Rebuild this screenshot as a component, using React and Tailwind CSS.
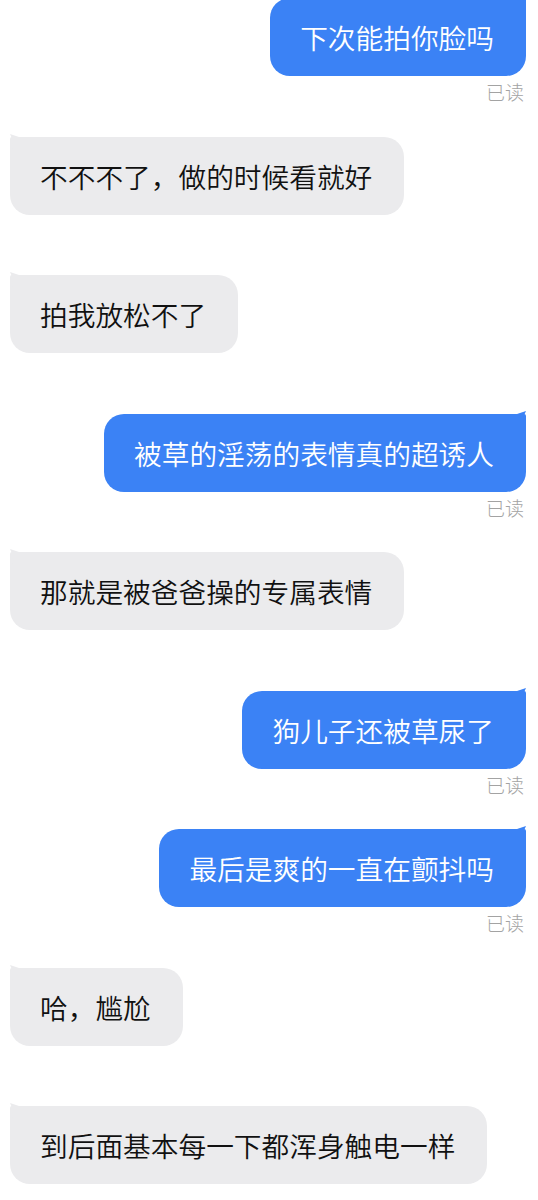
const messages = [
  { side: "out", text: "下次能拍你脸吗", read: true },
  { side: "in", text: "不不不了，做的时候看就好" },
  { side: "in", text: "拍我放松不了" },
  { side: "out", text: "被草的淫荡的表情真的超诱人", read: true },
  { side: "in", text: "那就是被爸爸操的专属表情" },
  { side: "out", text: "狗儿子还被草尿了", read: true },
  { side: "out", text: "最后是爽的一直在颤抖吗", read: true },
  { side: "in", text: "哈，尴尬" },
  { side: "in", text: "到后面基本每一下都浑身触电一样" },
];

// Small ear at the top corner of a bubble
function Ear({ side }) {
  if (side === "out") {
    return (
      <svg
        className="absolute -top-[3px] -right-[1px]"
        width="10"
        height="22"
        viewBox="0 0 10 22"
      >
        <path d="M0 3 L9 0 Q5 6 7 22 L0 22 Z" fill="#3b82f5" />
      </svg>
    );
  }
  return (
    <svg
      className="absolute -top-[3px] -left-[1px]"
      width="10"
      height="22"
      viewBox="0 0 10 22"
    >
      <path d="M10 3 L1 0 Q5 6 3 22 L10 22 Z" fill="#ebebed" />
    </svg>
  );
}

function Bubble({ side, text, read }) {
  const out = side === "out";
  return (
    <div className={out ? "flex justify-end" : "flex justify-start"}>
      <div className="relative">
        <div
          className={
            out
              ? "relative rounded-[20px] rounded-tr-[2px] bg-[#3b82f5] pl-[30px] pr-[32px] py-[25px] text-[27.7px] leading-[28px] font-[350] text-white"
              : "relative rounded-[20px] rounded-tl-[2px] bg-[#ebebed] pl-[30px] pr-[32px] py-[25px] text-[27.7px] leading-[28px] font-[350] text-[#111111]"
          }
        >
          <Ear side={side} />
          <span className="relative whitespace-nowrap">{text}</span>
        </div>
        {read && (
          <div className="absolute top-full right-[2px] mt-[6px] text-[19px] leading-[20px] font-light text-[#a3a3a3] whitespace-nowrap">
            已读
          </div>
        )}
      </div>
    </div>
  );
}

export default function App() {
  return (
    <div
      className="w-[538px] h-[1200px] overflow-hidden bg-white"
      style={{ fontFamily: '"Noto Sans CJK SC", "Noto Sans", sans-serif' }}
    >
      <div className="flex flex-col gap-[60.5px] pl-[10px] pr-[12px] -mt-[2px]">
        {messages.map((m, i) => (
          <Bubble key={i} {...m} />
        ))}
      </div>
    </div>
  );
}
